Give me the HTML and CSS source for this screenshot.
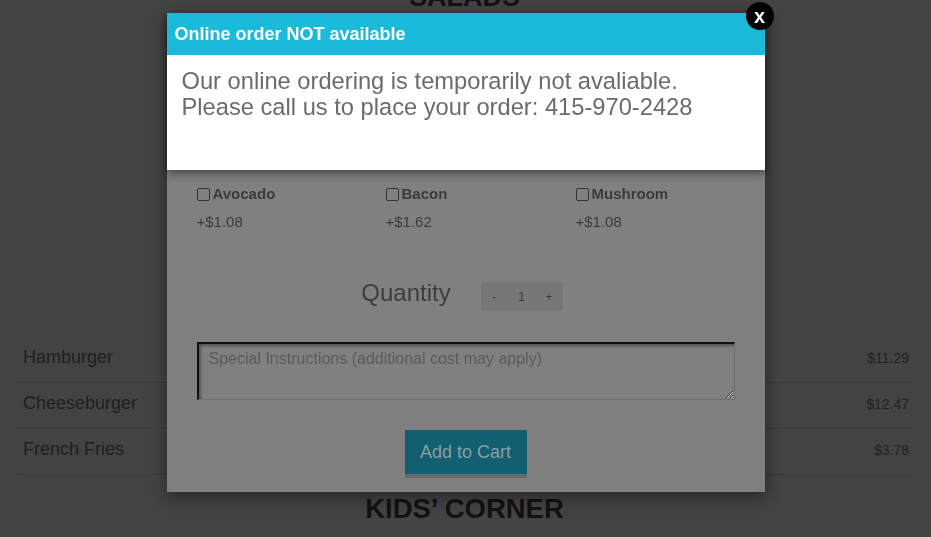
FILE: index.html
```html
<!DOCTYPE html>
<html lang="en">
<head>
<meta charset="utf-8">
<title>Menu</title>
<link rel="stylesheet" href="styles.css">
</head>
<body>
<main class="menu">
  <h2 class="section-title salads">SALADS</h2>
  <ul class="items">
    <li class="item"><span class="item-name">Hamburger</span><span class="item-price">$11.29</span></li>
    <li class="item"><span class="item-name">Cheeseburger</span><span class="item-price">$12.47</span></li>
    <li class="item"><span class="item-name">French Fries</span><span class="item-price">$3.78</span></li>
  </ul>
  <h2 class="section-title kids">KIDS’ CORNER</h2>
</main>

<div class="modal item-modal">
  <div class="options">
    <div class="option">
      <label class="option-label"><input type="checkbox" class="option-check">Avocado</label>
      <div class="option-price">+$1.08</div>
    </div>
    <div class="option">
      <label class="option-label"><input type="checkbox" class="option-check">Bacon</label>
      <div class="option-price">+$1.62</div>
    </div>
    <div class="option">
      <label class="option-label"><input type="checkbox" class="option-check">Mushroom</label>
      <div class="option-price">+$1.08</div>
    </div>
  </div>
  <div class="quantity">
    <span class="quantity-label">Quantity</span>
    <div class="stepper">
      <button class="step-btn">-</button>
      <span class="step-value">1</span>
      <button class="step-btn">+</button>
    </div>
  </div>
  <textarea class="instructions" placeholder="Special Instructions (additional cost may apply)"></textarea>
  <button class="add-cart">Add to Cart</button>
</div>

<div class="modal alert">
  <div class="alert-header">Online order NOT available</div>
  <div class="alert-body">
    <p class="alert-text">Our online ordering is temporarily not avaliable.<br>Please call us to place your order: 415-970-2428</p>
  </div>
  <button class="close-btn">x</button>
</div>
</body>
</html>
```
FILE: styles.css
```css
* { box-sizing: border-box; }

html, body {
  margin: 0;
  padding: 0;
  background: #434343;
  font-family: "Liberation Sans", Arial, sans-serif;
  overflow: hidden;
}

.menu {
  margin: 0 19px 0 17px;
}

.section-title {
  margin: 0;
  text-align: center;
  font-size: 27px;
  line-height: 30px;
  font-weight: bold;
  color: #121212;
}

.salads { margin-top: -18px; }

.items {
  list-style: none;
  margin: 325px 0 0;
  padding: 0;
}

.item {
  display: flex;
  justify-content: space-between;
  align-items: center;
  height: 46px;
  padding: 0 3px 4px 6px;
  border-bottom: 1px solid #3a3a3a;
}

.item-name {
  font-size: 18px;
  color: #1f1f1f;
}

.item-price {
  font-size: 14px;
  color: #222;
}

.kids {
  margin-top: 19px;
  font-size: 27.5px;
}

.modal {
  position: fixed;
  top: 13px;
  left: 0;
  right: 0;
  margin: 0 auto;
  width: 598px;
}

.item-modal {
  z-index: 1;
  background: #808080;
  padding: 171px 30px 14px;
  box-shadow: 0 5px 15px rgba(0, 0, 0, 0.45);
  display: flex;
  flex-direction: column;
}

.options {
  display: grid;
  grid-template-columns: 189px 190px 1fr;
}

.option-label {
  display: flex;
  align-items: center;
  font-size: 15px;
  line-height: 20px;
  font-weight: bold;
  color: #3a3a3a;
}

.option-check {
  appearance: none;
  -webkit-appearance: none;
  width: 13px;
  height: 13px;
  margin: 0 3px 0 0;
  border: 1px solid #333;
  border-radius: 2px;
  background: #808080;
}

.option-price {
  margin-top: 8px;
  font-size: 15px;
  line-height: 20px;
  color: #3b3b3b;
}

.quantity {
  margin-top: 50px;
  display: flex;
  justify-content: center;
  align-items: flex-start;
  gap: 30px;
  padding-right: 7px;
}

.quantity-label {
  font-size: 24px;
  line-height: 22px;
  color: #3d3d3d;
}

.stepper {
  display: grid;
  grid-template-columns: repeat(3, 1fr);
  align-items: center;
  width: 82px;
  height: 29px;
  background: #777;
  border-radius: 3px;
}

.step-btn,
.step-value {
  border: 0;
  background: transparent;
  padding: 0;
  font-family: "Liberation Sans", Arial, sans-serif;
  font-size: 12px;
  color: #3b3b3b;
  text-align: center;
}

.instructions {
  display: block;
  margin-top: 31px;
  width: 100%;
  height: 58px;
  padding: 6px 10px;
  font-family: "Liberation Sans", Arial, sans-serif;
  font-size: 16px;
  background: #808080;
  border-top: 2px solid #111;
  border-left: 2px solid #111;
  border-right: 1px solid #6e6e6e;
  border-bottom: 1px solid #6e6e6e;
  box-shadow: inset 2px 2px 3px rgba(0, 0, 0, 0.35);
  color: #3b3b3b;
}

.instructions::placeholder {
  color: #5a5a5a;
}

.add-cart {
  margin: 30px auto 0;
  width: 122px;
  height: 48px;
  padding: 0;
  background: #115f70;
  border: 0;
  border-bottom: 4px solid #6a6a6a;
  color: #8a9ea4;
  font-family: "Liberation Sans", Arial, sans-serif;
  font-size: 18px;
}

.alert {
  z-index: 2;
  background: #fff;
  box-shadow: 0 3px 9px rgba(0, 0, 0, 0.5);
}

.alert-header {
  height: 42px;
  padding: 0 8px;
  background: #1bb9da;
  color: #fff;
  font-size: 18px;
  font-weight: bold;
  line-height: 42px;
}

.alert-body {
  padding: 13px 15px 50px;
}

.alert-text {
  margin: 0;
  font-size: 23.7px;
  line-height: 26px;
  color: #6b6b6b;
}

.close-btn {
  position: absolute;
  top: -11px;
  right: -9px;
  width: 28px;
  height: 28px;
  padding: 0;
  border: 0;
  border-radius: 50%;
  background: #000;
  color: #fff;
  font-family: "Liberation Sans", Arial, sans-serif;
  font-size: 20px;
  font-weight: bold;
  line-height: 24px;
}
```
